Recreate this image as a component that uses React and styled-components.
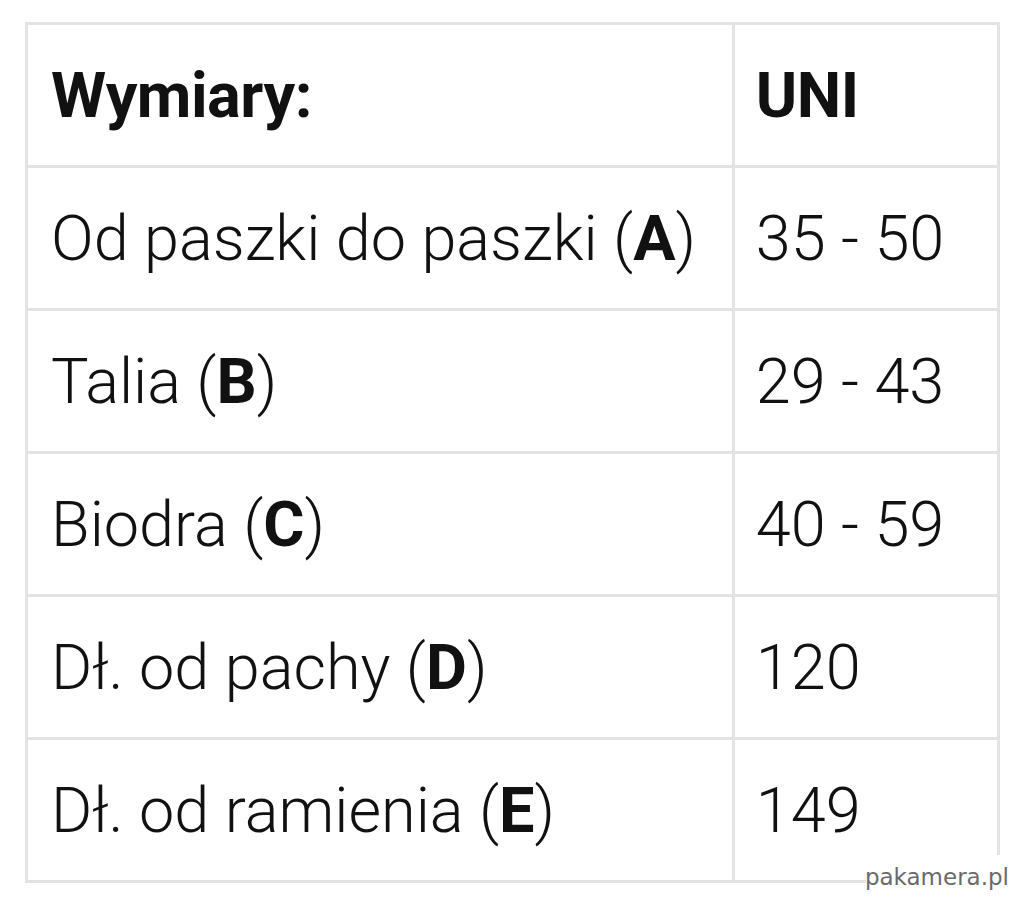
import React from "react";
import styled, { createGlobalStyle } from "styled-components";

const GlobalStyle = createGlobalStyle`
  html, body {
    margin: 0;
    padding: 0;
    background: #ffffff;
  }
  body {
    font-family: Roboto, "Liberation Sans", sans-serif;
  }
`;

const rows = [
  { label: "Od paszki do paszki", letter: "A", value: "35 - 50" },
  { label: "Talia", letter: "B", value: "29 - 43" },
  { label: "Biodra", letter: "C", value: "40 - 59" },
  { label: "Dł. od pachy", letter: "D", value: "120" },
  { label: "Dł. od ramienia", letter: "E", value: "149" },
];

const Page = styled.div`
  position: relative;
  width: 1019px;
  height: 900px;
  padding: 22px 0 0 25px;
  box-sizing: border-box;
`;

const Table = styled.table`
  border-collapse: collapse;
  width: 975px;
  color: #111;
  font-family: Roboto, "Liberation Sans", sans-serif;
`;

const Cell = styled.td`
  border: 3px solid #e3e3e3;
  height: 143px;
  box-sizing: border-box;
  padding: 0 0 0 ${(p) => p.$pad}px;
  width: ${(p) => p.$w}px;
  font-size: 63px;
  font-weight: ${(p) => (p.$head ? 700 : 300)};
  letter-spacing: ${(p) => (p.$head ? "-0.5px" : "0")};
  vertical-align: middle;
  white-space: nowrap;
`;

const Letter = styled.b`
  font-weight: 700;
`;

const Watermark = styled.div`
  position: absolute;
  right: 0;
  bottom: 0;
  width: 153px;
  height: 45px;
  background: #ffffff;
  display: flex;
  align-items: center;
  justify-content: flex-end;
  padding: 0 10px 2px 0;
  box-sizing: border-box;
  font-family: "DejaVu Sans", sans-serif;
  font-size: 23px;
  color: #6a6a6a;
  letter-spacing: 0;
`;

export default function App() {
  return (
    <>
      <GlobalStyle />
      <Page>
        <Table>
          <tbody>
            <tr>
              <Cell $head $w={708} $pad={23}>Wymiary:</Cell>
              <Cell $head $w={267} $pad={21}>UNI</Cell>
            </tr>
            {rows.map((r) => (
              <tr key={r.letter}>
                <Cell $w={708} $pad={23}>
                  {r.label} (<Letter>{r.letter}</Letter>)
                </Cell>
                <Cell $w={267} $pad={21}>{r.value}</Cell>
              </tr>
            ))}
          </tbody>
        </Table>
        <Watermark>pakamera.pl</Watermark>
      </Page>
    </>
  );
}
